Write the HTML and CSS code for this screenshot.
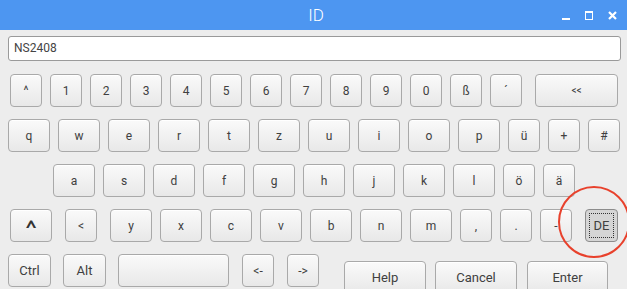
FILE: index.html
```html
<!DOCTYPE html>
<html>

<head>
    <title>ID</title>
    <link rel="stylesheet" href="styles.css">
</head>

<body>
    <div class="window">
        <div class="titlebar">
            <span class="title">ID</span>
            <div class="controls">
                <span class="ctl-min"></span>
                <span class="ctl-max"></span>
                <svg class="ctl-close" width="9" height="9" viewBox="0 0 9 9">
                    <path d="M1 1 L8 8 M8 1 L1 8" stroke="#fff" stroke-width="2.2" />
                </svg>
            </div>
        </div>

        <div class="entry">NS2408</div>

        <div class="keyboard">
            <!-- row 1 -->
            <div class="row row1">
                <button class="key">^</button>
                <button class="key">1</button>
                <button class="key">2</button>
                <button class="key">3</button>
                <button class="key">4</button>
                <button class="key">5</button>
                <button class="key">6</button>
                <button class="key">7</button>
                <button class="key">8</button>
                <button class="key">9</button>
                <button class="key">0</button>
                <button class="key">ß</button>
                <button class="key">´</button>
                <button class="key back sp13">&lt;&lt;</button>
            </div>
            <!-- row 2 -->
            <div class="row row2">
                <button class="key wide">q</button>
                <button class="key wide">w</button>
                <button class="key wide">e</button>
                <button class="key wide">r</button>
                <button class="key wide">t</button>
                <button class="key wide">z</button>
                <button class="key wide">u</button>
                <button class="key wide">i</button>
                <button class="key wide">o</button>
                <button class="key wide">p</button>
                <button class="key">ü</button>
                <button class="key">+</button>
                <button class="key">#</button>
            </div>
            <!-- row 3 -->
            <div class="row row3">
                <button class="key wide">a</button>
                <button class="key wide">s</button>
                <button class="key wide">d</button>
                <button class="key wide">f</button>
                <button class="key wide">g</button>
                <button class="key wide">h</button>
                <button class="key wide">j</button>
                <button class="key wide">k</button>
                <button class="key wide">l</button>
                <button class="key">ö</button>
                <button class="key">ä</button>
            </div>
            <!-- row 4 -->
            <div class="row row4">
                <button class="key wide"><span class="caret">^</span></button>
                <button class="key sp13">&lt;</button>
                <button class="key wide sp13">y</button>
                <button class="key wide">x</button>
                <button class="key wide">c</button>
                <button class="key wide">v</button>
                <button class="key wide">b</button>
                <button class="key wide">n</button>
                <button class="key wide">m</button>
                <button class="key">,</button>
                <button class="key">.</button>
                <button class="key">-</button>
                <button class="key lang sp13"><span class="focus">DE</span></button>
            </div>
            <!-- row 5 -->
            <div class="row row5">
                <button class="key mod">Ctrl</button>
                <button class="key mod sp12">Alt</button>
                <button class="key space sp12"></button>
                <button class="key sp13">&lt;-</button>
                <button class="key sp13">-&gt;</button>
                <button class="key action help">Help</button>
                <button class="key action cancel">Cancel</button>
                <button class="key action enter">Enter</button>
            </div>
        </div>

        <div class="marker"></div>
    </div>
</body>

</html>
```

FILE: styles.css
```css
html,
body {
    margin: 0;
    padding: 0;
    background: #ffffff;
    font-family: Roboto, "Liberation Sans", sans-serif;
}

.window {
    position: relative;
    width: 627px;
    height: 289px;
    background: #ededed;
    overflow: hidden;
}

/* title bar */
.titlebar {
    height: 30px;
    background: #4d96f1;
    display: flex;
    align-items: center;
    justify-content: center;
    position: relative;
}

.title {
    color: #ffffff;
    font-size: 17px;
    font-weight: 300;
    margin-left: 5px;
}

.controls {
    position: absolute;
    right: 10px;
    top: 0;
    height: 30px;
    display: flex;
    align-items: center;
    gap: 15px;
}

.ctl-min {
    width: 8px;
    height: 2px;
    background: #ffffff;
    margin-top: 8px;
}

.ctl-max {
    width: 6px;
    height: 6px;
    border: 1px solid #ffffff;
    border-top-width: 2px;
    margin-top: 1px;
}

.ctl-close {
    margin-top: 1px;
}

/* text entry */
.entry {
    margin: 6px 6px 0 8px;
    height: 25px;
    box-sizing: border-box;
    background: #ffffff;
    border: 1px solid #9a9a9a;
    border-radius: 3px;
    padding: 0 5px;
    font-size: 12px;
    line-height: 23px;
    color: #444444;
}

/* keyboard */
.keyboard {
    margin-top: 13px;
    display: flex;
    flex-direction: column;
    gap: 12px;
}

.row {
    display: flex;
    gap: 8px;
    height: 33px;
}

.row1 {
    padding-left: 10px;
}

.row2 {
    padding-left: 8px;
}

.row3 {
    padding-left: 53px;
}

.row4 {
    padding-left: 10px;
}

.row5 {
    padding-left: 8px;
}

.key {
    width: 32px;
    height: 33px;
    margin: 0;
    padding: 0;
    box-sizing: border-box;
    border: 1px solid #a9a9a9;
    border-radius: 4px;
    background: linear-gradient(#fafafa, #e8e8e8);
    box-shadow: inset 0 1px 0 #ffffff;
    font-family: Roboto, "Liberation Sans", sans-serif;
    font-size: 12px;
    color: #404040;
    display: flex;
    align-items: center;
    justify-content: center;
    flex-shrink: 0;
}

.wide {
    width: 42px;
}

.back {
    width: 83px;
    font-size: 10px;
}

.sp13 {
    margin-left: 5px;
}

.sp12 {
    margin-left: 4px;
}

.caret {
    font-size: 28px;
    line-height: 28px;
    color: #333333;
    margin-top: 4px;
    transform: scaleY(0.75);
}

.lang {
    width: 33px;
    background: #d5d5d5;
    border-color: #8c8c8c;
    box-shadow: none;
    padding: 3px;
}

.focus {
    flex: 1;
    align-self: stretch;
    display: flex;
    align-items: center;
    justify-content: center;
    border: 1px dotted #333333;
    font-size: 13px;
}

.mod {
    width: 43px;
    font-size: 13px;
}

.space {
    width: 111px;
}

.action {
    width: 82px;
    margin-top: 7px;
    font-size: 13px;
}

.help {
    margin-left: 17px;
}

.cancel {
    margin-left: 1px;
}

.enter {
    width: 81px;
    margin-left: 2px;
}

/* red highlight drawn over the screenshot */
.marker {
    position: absolute;
    left: 558px;
    top: 186px;
    width: 72px;
    height: 72px;
    box-sizing: border-box;
    border: 2.5px solid #e8412c;
    border-radius: 50%;
}
```
